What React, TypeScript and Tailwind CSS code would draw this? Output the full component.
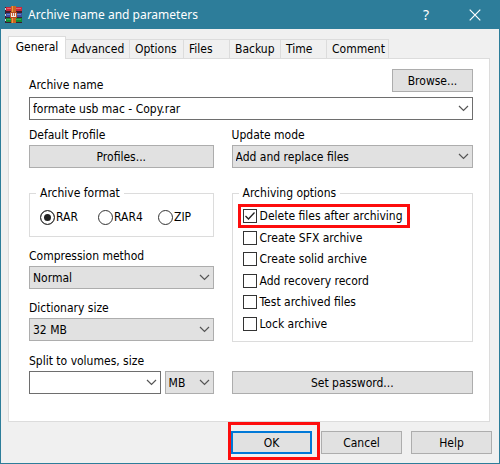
import { useId, useState } from "react";
import type { ReactNode } from "react";
import clsx from "clsx";

const TABS = [
	{ name: "Advanced", width: "w-16" },
	{ name: "Options", width: "w-[54px]" },
	{ name: "Files", width: "w-[46px]" },
	{ name: "Backup", width: "w-[51px]" },
	{ name: "Time", width: "w-[46px]" },
	{ name: "Comment", width: "w-[62px]" },
];

const FORMATS = [
	{ name: "RAR", width: "w-[58px]" },
	{ name: "RAR4", width: "w-[60px]" },
	{ name: "ZIP", width: "w-12" },
];

const OPTIONS = [
	"Delete files after archiving",
	"Create SFX archive",
	"Create solid archive",
	"Add recovery record",
	"Test archived files",
	"Lock archive",
];

export default function App() {
	return (
		<div className="flex min-h-screen flex-col border border-[#2d7d9a] bg-[#f0f0f0] font-['DejaVu_Sans_Condensed','DejaVu_Sans',sans-serif] text-[12px] leading-4 text-black">
			<TitleBar />

			<main className="flex-grow pt-[7px] pr-[9px] pl-[7px]">
				<div role="tablist" className="flex items-end">
					<button
						role="tab"
						aria-selected="true"
						className="relative -mb-px h-[23px] w-[58px] border border-b-0 border-[#dcdcdc] bg-white pb-0.5"
					>
						General
					</button>
					{TABS.map((tab) => (
						<button
							key={tab.name}
							role="tab"
							aria-selected="false"
							className={clsx(
								"h-[19px] border-t border-r border-[#dcdcdc] pl-[5px] text-left whitespace-nowrap",
								tab.width
							)}
						>
							{tab.name}
						</button>
					))}
				</div>

				{/* General page */}
				<section className="border border-[#dcdcdc] bg-white pt-2.5 pr-4 pb-[27px] pl-5">
					<div className="flex items-end justify-between">
						<label htmlFor="archive-name" className="mb-1">
							Archive name
						</label>
						<PushButton className="mb-[5px] w-[81px]">Browse...</PushButton>
					</div>
					<Combo
						id="archive-name"
						defaultValue="formate usb mac - Copy.rar"
					/>

					<div className="mt-[7px] grid grid-cols-[185fr_242fr] gap-x-[18px]">
						<div className="flex flex-col">
							<span className="mb-0.5">Default Profile</span>
							<PushButton>Profiles...</PushButton>
						</div>
						<Field label="Update mode" options={["Add and replace files"]} />
					</div>

					<div className="mt-[17px] grid grid-cols-[185fr_242fr] gap-x-[18px]">
						<div className="flex flex-col gap-[11px]">
							<fieldset className="h-[52px] border border-[#dcdcdc] pl-2.5">
								<legend className="-ml-1 px-1">Archive format</legend>
								<div className="mt-2 flex">
									{FORMATS.map((format) => (
										<label
											key={format.name}
											className={clsx("flex items-center gap-px", format.width)}
										>
											<input
												type="radio"
												name="format"
												defaultChecked={format.name === "RAR"}
												className="size-[15px] shrink-0 appearance-none rounded-full border border-[#333] bg-white shadow-[inset_0_0_0_3px_white] checked:bg-[#222]"
											/>
											{format.name}
										</label>
									))}
								</div>
							</fieldset>
							<Field label="Compression method" options={["Normal"]} />
							<Field label="Dictionary size" options={["32 MB"]} />
						</div>

						<fieldset className="self-start border border-[#dcdcdc] pb-2.5 pl-2.5">
							<legend className="-ml-1 px-1">Archiving options</legend>
							<div className="flex h-[130px] flex-col items-start justify-between pt-2">
								{OPTIONS.map((option, i) => (
									<Option key={option} label={option} highlighted={i === 0} />
								))}
							</div>
						</fieldset>
					</div>

					<div className="mt-[11px] grid grid-cols-[185fr_242fr] items-end gap-x-[18px]">
						<div>
							<label htmlFor="volume" className="mb-0.5 block">
								Split to volumes, size
							</label>
							<div className="flex gap-1">
								<div className="min-w-0 flex-grow">
									<Combo id="volume" />
								</div>
								<div className="w-[49px] shrink-0">
									<DropDown label="Volume unit" options={["MB"]} />
								</div>
							</div>
						</div>
						<PushButton>Set password...</PushButton>
					</div>
				</section>
			</main>

			<footer className="flex justify-end gap-[9px] pt-[9px] pr-[7px] pb-[9px]">
				<div className="relative w-[81px]">
					<button className="h-[23px] w-full border-2 border-[#0078d7] bg-[#e1e1e1]">
						OK
					</button>
					<span className="pointer-events-none absolute -top-[9px] -right-2 -bottom-1.5 -left-[3px] border-3 border-[#fd0d0d]" />
				</div>
				<PushButton className="w-[81px]">Cancel</PushButton>
				<PushButton className="w-[81px]">Help</PushButton>
			</footer>
		</div>
	);
}

function TitleBar() {
	return (
		<header className="flex h-7 items-center bg-[#2d7d9a] pr-[18px] pl-[3px] text-white">
			<WinrarIcon />
			<h1 className="ml-[5px] flex-grow font-['Noto_Sans',sans-serif] text-[12px]">
				Archive name and parameters
			</h1>
			<button
				aria-label="Help"
				className="mr-10 font-['Noto_Sans',sans-serif] text-[14px]"
			>
				?
			</button>
			<button aria-label="Close">
				<svg
					width="12"
					height="12"
					viewBox="0 0 12 12"
					fill="none"
					stroke="currentColor"
					strokeWidth="1.2"
				>
					<path d="M.7.7l10.6 10.6M11.3.7L.7 11.3" />
				</svg>
			</button>
		</header>
	);
}

function WinrarIcon() {
	return (
		<svg width="19" height="18" viewBox="0 0 19 18">
			<path fill="#3d1d2c" d="M1 1h17v16H1z" />
			<path fill="#c8283c" d="M2 1h16v4H2z" />
			<path fill="#e8606e" d="M3 2h14v1H3z" />
			<path fill="#3a4fa0" d="M2 7h16v4H2z" />
			<path fill="#6f80c6" d="M3 8h14v1H3z" />
			<path fill="#128a34" d="M2 12h16v4H2z" />
			<path fill="#38aa50" d="M3 13h14v1H3z" />
			<path fill="#d9d2cc" d="M1 2h1v2H1zM1 8h1v2H1zM1 13h1v2H1z" />
			<path fill="#c8641e" d="M7 0h5v17H7z" />
			<path fill="#ec9a48" d="M8 0h1v17H8z" />
			<path fill="#b8481c" d="M6 6h7v6H6z" />
			<path d="M7.5 7v3.5h4V7M9.5 7v3" fill="none" stroke="#f4ece4" strokeWidth="1.2" />
		</svg>
	);
}

function PushButton({
	className,
	children,
}: {
	className?: string;
	children: ReactNode;
}) {
	return (
		<button
			className={clsx("h-[23px] border border-[#adadad] bg-[#e1e1e1]", className)}
		>
			{children}
		</button>
	);
}

function Chevron() {
	return (
		<svg
			className="pointer-events-none absolute top-2 right-1"
			width="11"
			height="7"
			viewBox="0 0 11 7"
			fill="none"
			stroke="#555"
			strokeWidth="1.2"
		>
			<path d="M1 1l4.5 4.5L10 1" />
		</svg>
	);
}

function Combo({ id, defaultValue }: { id: string; defaultValue?: string }) {
	return (
		<div className="relative">
			<input
				id={id}
				type="text"
				defaultValue={defaultValue}
				className="block h-[23px] w-full border border-[#6e6e6e] bg-white pr-5 pl-[3px] outline-none"
			/>
			<Chevron />
		</div>
	);
}

function DropDown({
	id,
	label,
	options,
}: {
	id?: string;
	label?: string;
	options: string[];
}) {
	return (
		<div className="relative">
			<select
				id={id}
				aria-label={label}
				className="block h-[23px] w-full appearance-none border border-[#adadad] bg-[#e1e1e1] pl-[3px]"
			>
				{options.map((option) => (
					<option key={option}>{option}</option>
				))}
			</select>
			<Chevron />
		</div>
	);
}

function Field({ label, options }: { label: string; options: string[] }) {
	const id = useId();
	return (
		<div>
			<label htmlFor={id} className="mb-0.5 block">
				{label}
			</label>
			<DropDown id={id} options={options} />
		</div>
	);
}

function Option({
	label,
	highlighted,
}: {
	label: string;
	highlighted: boolean;
}) {
	const [checked, setChecked] = useState(highlighted);
	return (
		<label
			className={clsx(
				"relative flex h-3.5 items-center gap-[3px] pr-0.5",
				highlighted && "outline-3 outline-offset-2 outline-[#fd0d0d]"
			)}
		>
			<input
				type="checkbox"
				checked={checked}
				onChange={(e) => setChecked(e.target.checked)}
				className="size-3.5 appearance-none border border-[#333] bg-white"
			/>
			{checked && (
				<svg
					className="pointer-events-none absolute top-0 left-0"
					width="14"
					height="14"
					viewBox="0 0 14 14"
					fill="none"
					stroke="#222"
					strokeWidth="1.3"
				>
					<path d="M2.5 7l3 3 6-6.5" />
				</svg>
			)}
			{label}
		</label>
	);
}
